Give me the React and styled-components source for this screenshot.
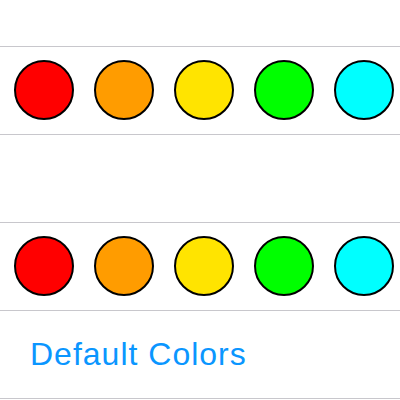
import styled, { createGlobalStyle } from "styled-components";

const Global = createGlobalStyle`
    body {
        margin:0;
        background:#fff;
        font-family:"Liberation Sans", Arial, sans-serif;
    }
`

const colors = ["#ff0000", "#ff9c00", "#ffe400", "#00ff00", "#00ffff"];

function App(){
    return(
        <>
            <Global />
            <Page>
                <Row>
                    {colors.map(c => <Swatch key={c} color={c} />)}
                </Row>
                <Row />
                <Row>
                    {colors.map(c => <Swatch key={c} color={c} />)}
                </Row>
                <Row last>
                    <Link>Default Colors</Link>
                </Row>
            </Page>
        </>
    )
};

const Page = styled.div`
    width:400px;
    height:400px;
    padding-top:46px;
    box-sizing:border-box;
    overflow:hidden;
`
const Row = styled.div`
    height:87px;
    border-top:1px solid #c8c7cc;
    ${p => p.last && "border-bottom:1px solid #c8c7cc;"}
    display:flex;
    align-items:center;
    gap:20px;
    padding-left:14px;
`
const Swatch = styled.div`
    flex:none;
    width:60px;
    height:60px;
    margin-top:-2px;
    box-sizing:border-box;
    border-radius:50%;
    border:2px solid #000;
    background:${p => p.color};
`
const Link = styled.span`
    margin-left:16px;
    font-size:32px;
    letter-spacing:1px;
    color:#0a96ff;
`

export default App;
